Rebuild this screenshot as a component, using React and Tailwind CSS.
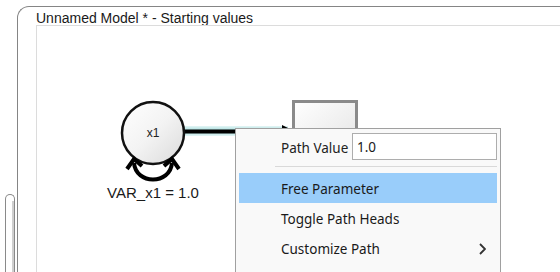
import React from "react";

function Diagram() {
  return (
    <svg
      className="absolute left-0 top-0"
      width="523"
      height="246"
      viewBox="37 26 523 246"
    >
      <defs>
        <linearGradient id="nodeGrad" x1="0" y1="0" x2="1" y2="1">
          <stop offset="0" stopColor="#ffffff" />
          <stop offset="0.5" stopColor="#f3f3f3" />
          <stop offset="1" stopColor="#dadada" />
        </linearGradient>
        <linearGradient id="boxGrad" x1="0" y1="0" x2="1" y2="1">
          <stop offset="0" stopColor="#ffffff" />
          <stop offset="1" stopColor="#e4e4e4" />
        </linearGradient>
        <linearGradient id="glow" x1="0" y1="0" x2="0" y2="1">
          <stop offset="0" stopColor="#e4f6f6" />
          <stop offset="0.5" stopColor="#9fd8d8" />
          <stop offset="1" stopColor="#e4f6f6" />
        </linearGradient>
      </defs>

      {/* path highlight */}
      <rect x="184" y="126" width="104" height="10" fill="url(#glow)" />
      <line x1="184" y1="131.5" x2="284" y2="131.5" stroke="#000" strokeWidth="4" />
      <polygon points="282,125 292,130 282,135" fill="#000" />

      {/* manifest box */}
      <rect
        x="293.5"
        y="101.5"
        width="63"
        height="50"
        fill="url(#boxGrad)"
        stroke="#8a8a8a"
        strokeWidth="3"
      />

      {/* latent circle */}
      <circle cx="153" cy="133" r="31" fill="url(#nodeGrad)" stroke="#111" strokeWidth="2.5" />
      <text
        x="153"
        y="137"
        textAnchor="middle"
        fontFamily="'Liberation Sans', Arial, sans-serif"
        fontSize="12"
        fill="#222"
      >
        x1
      </text>

      {/* variance arrow */}
      <path d="M 134 163 C 136 185, 170 185, 172 163" fill="none" stroke="#000" strokeWidth="4" />
      <polyline
        points="127,169 134,159 142,166"
        fill="none"
        stroke="#000"
        strokeWidth="4"
        strokeLinejoin="miter"
      />
      <polyline
        points="164,166 172,159 179,169"
        fill="none"
        stroke="#000"
        strokeWidth="4"
        strokeLinejoin="miter"
      />

      <text
        x="153"
        y="198"
        textAnchor="middle"
        fontFamily="'Liberation Sans', Arial, sans-serif"
        fontSize="15"
        fill="#1a1a1a"
      >
        VAR_x1 = 1.0
      </text>
    </svg>
  );
}

function ContextMenu() {
  return (
    <div
      className="absolute left-[235px] top-[128px] w-[266px] h-[160px] bg-[#f9f9f9] border border-[#a0a0a0] px-[3px] pt-[3px] text-[13.5px] text-[#1a1a1a]"
      style={{ fontFamily: "'Noto Sans', 'Open Sans', sans-serif" }}
    >
      <div className="flex items-center h-[27px] mt-[1px] pl-[42px]">
        <span className="text-[#222] pt-[3px]">Path Value</span>
        <div className="ml-auto w-[145px] h-[27px] border border-[#adadad] bg-white pl-[4px] pt-[2px] flex items-center">
          1.0
        </div>
      </div>
      <div className="mt-[6px] ml-[36px] h-px bg-[#d9d9d9]" />
      <div className="mt-[6px] h-[30px] bg-[#99cdfa] flex items-center pl-[42px] pt-[2px]">
        Free Parameter
      </div>
      <div className="h-[30px] flex items-center pl-[42px] pt-[2px]">Toggle Path Heads</div>
      <div className="h-[30px] flex items-center pl-[42px] pr-[11px] pt-[2px]">
        <span>Customize Path</span>
        <svg className="ml-auto" width="7" height="12" viewBox="0 0 7 12">
          <polyline points="1,1 6,6 1,11" fill="none" stroke="#333" strokeWidth="1.8" />
        </svg>
      </div>
    </div>
  );
}

export default function App() {
  return (
    <div
      className="relative w-[560px] h-[272px] overflow-hidden bg-white flex"
      style={{ fontFamily: "'Liberation Sans', Arial, sans-serif" }}
    >
      {/* left strip with partial window edge */}
      <div className="w-[17px] shrink-0 pt-[194px] pl-[5px]">
        <div className="w-[10px] h-[100px] rounded-t-[5px] border border-b-0 border-[#8a8a8a] bg-white flex justify-end">
          <div className="w-[2px] mt-[6px] bg-[#cfcfcf]" />
        </div>
      </div>

      {/* main frame */}
      <div className="flex-1 mt-[6px] border-l border-t border-[#858585] rounded-tl-[12px] flex flex-col pl-[18px]">
        <div className="h-[18px] pt-[3px] text-[14px] leading-[16px] text-[#1a1a1a] whitespace-nowrap">
          Unnamed Model * - Starting values
        </div>
        <div className="relative flex-1 border-l border-t border-[#dcdcdc] bg-white">
          <Diagram />
        </div>
      </div>

      <ContextMenu />
    </div>
  );
}
